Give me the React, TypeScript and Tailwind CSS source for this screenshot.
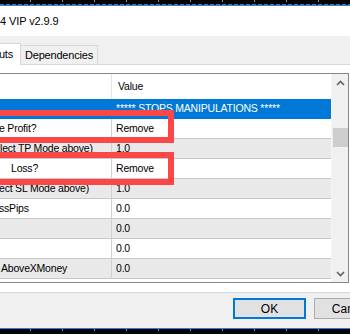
const rows = [
  { name: "", pad: "", value: "***** STOPS MANIPULATIONS *****", kind: "sel" },
  { name: "e Profit?", pad: "-ml-px", value: "Remove", kind: "white" },
  { name: "lect TP Mode above)", pad: "ml-0", value: "1.0", kind: "gray" },
  { name: "Loss?", pad: "pl-[11px]", value: "Remove", kind: "white" },
  { name: "ect SL Mode above)", pad: "-ml-px", value: "1.0", kind: "gray" },
  { name: "ssPips", pad: "-ml-px", value: "0.0", kind: "white" },
  { name: "", pad: "", value: "0.0", kind: "gray" },
  { name: "", pad: "", value: "0.0", kind: "white" },
  { name: "AboveXMoney", pad: "pl-px", value: "0.0", kind: "gray" },
];

const rowBg: Record<string, string> = {
  sel: "bg-[#0078d7] text-white border-[#0078d7]",
  white: "bg-white text-black border-[#c8c8c8]",
  gray: "bg-[#e9e9e9] text-black border-[#c8c8c8]",
};

function Chevron({ up }: { up?: boolean }) {
  return (
    <svg width="9" height="6" viewBox="0 0 9 6" className="block">
      <path
        d={up ? "M1 5 L4.5 1.5 L8 5" : "M1 1 L4.5 4.5 L8 1"}
        fill="none"
        stroke="#606060"
        strokeWidth="1.6"
      />
    </svg>
  );
}

function TickBar({ top }: { top?: boolean }) {
  const ticks =
    "bg-[repeating-linear-gradient(90deg,transparent_0_30px,#7c8ea3_30px_31px,transparent_31px_32px)]";
  const dash =
    "bg-[repeating-linear-gradient(90deg,#4d7396_0_4px,#0a0a0a_4px_6px)]";
  if (top) {
    return (
      <div className="flex h-[6px] flex-col bg-[#050505]">
        <div className={`h-[2px] ${ticks}`} />
        <div className="h-[2px]" />
        <div className={`h-px ${dash}`} />
        <div className="h-px bg-[#2f80d0]" />
      </div>
    );
  }
  return (
    <div className="flex h-[6px] flex-col bg-[#050505]">
      <div className="h-px bg-[#2f80d0]" />
      <div className={`h-[2px] ${ticks}`} />
    </div>
  );
}

export default function App() {
  return (
    <div className="relative h-[334px] w-[350px] overflow-hidden bg-[#f0f0f0] font-['Liberation_Sans',Arial,sans-serif] text-black">
      <TickBar top />

      {/* title bar */}
      <div className="flex h-[30px] items-center bg-white">
        <span className="text-[11px] tracking-[-0.1px] text-black">4 VIP v2.9.9</span>
      </div>

      {/* tab strip */}
      <div className="flex h-[28px] items-end bg-[#f0f0f0]">
        <div className="-ml-[10px] flex h-[21px] w-[31px] items-center justify-end border-r border-t border-[#d9d9d9] bg-white pr-[7px] text-[11px] tracking-[-0.2px]">
          uts
        </div>
        <div className="flex h-[19px] w-[77px] items-center justify-center border-r border-t border-[#d9d9d9] bg-[#f0f0f0] text-[11px] tracking-[-0.2px]">
          Dependencies
        </div>
      </div>
      <div className="flex h-px">
        <div className="w-[20px] bg-white" />
        <div className="flex-1 bg-[#d9d9d9]" />
      </div>

      {/* tab page */}
      <div className="h-[228px] border-b border-[#d9d9d9] bg-white pt-[8px]">
        <div className="-ml-px flex h-[210px] w-[350px] border border-[#828790] bg-white text-[10.5px] tracking-[-0.2px]">
          <div className="flex w-[331px] flex-col">
            <div className="flex h-[25px] items-center">
              <div className="h-full w-[112px] border-r border-[#e3e3e3]" />
              <span className="pl-[6px]">Value</span>
            </div>
            {rows.map((r, i) => (
              <div key={i} className={`flex h-[20px] border-b ${rowBg[r.kind]}`}>
                <div
                  className={`flex w-[112px] items-center overflow-hidden whitespace-nowrap border-r ${
                    r.kind === "sel" ? "border-[#0078d7]" : "border-[#d0d0d0]"
                  } ${r.pad.startsWith("p") ? r.pad : ""}`}
                >
                  <span className={r.pad.startsWith("p") ? "" : r.pad}>{r.name}</span>
                </div>
                <div className="flex flex-1 items-center whitespace-nowrap pl-[4px]">{r.value}</div>
              </div>
            ))}
          </div>
          {/* scrollbar */}
          <div className="flex w-[17px] flex-col items-center border-l border-[#f5f5f5] bg-[#f0f0f0]">
            <div className="flex h-[17px] items-center justify-center">
              <Chevron up />
            </div>
            <div className="mt-[37px] h-[19px] w-[15px] bg-[#cdcdcd]" />
            <div className="flex-1" />
            <div className="flex h-[17px] items-center justify-center">
              <Chevron />
            </div>
          </div>
        </div>
      </div>

      {/* buttons */}
      <div className="flex h-[35px] items-start gap-[8px] pl-[233px] pt-[5px]">
        <button className="flex h-[21px] w-[73px] shrink-0 items-center justify-center border-2 border-[#0078d7] bg-[#e1e1e1] text-[12px]">
          OK
        </button>
        <button className="flex h-[21px] w-[73px] shrink-0 items-center justify-center border border-[#adadad] bg-[#e1e1e1] text-[12px]">
          Cancel
        </button>
      </div>

      <TickBar />

      {/* highlight boxes */}
      <div className="absolute left-[-10px] top-[110px] h-[33px] w-[184px] border-[6px] border-[#fc4747]" />
      <div className="absolute left-[-10px] top-[152px] h-[33px] w-[184px] border-[6px] border-[#fc4747]" />
    </div>
  );
}
